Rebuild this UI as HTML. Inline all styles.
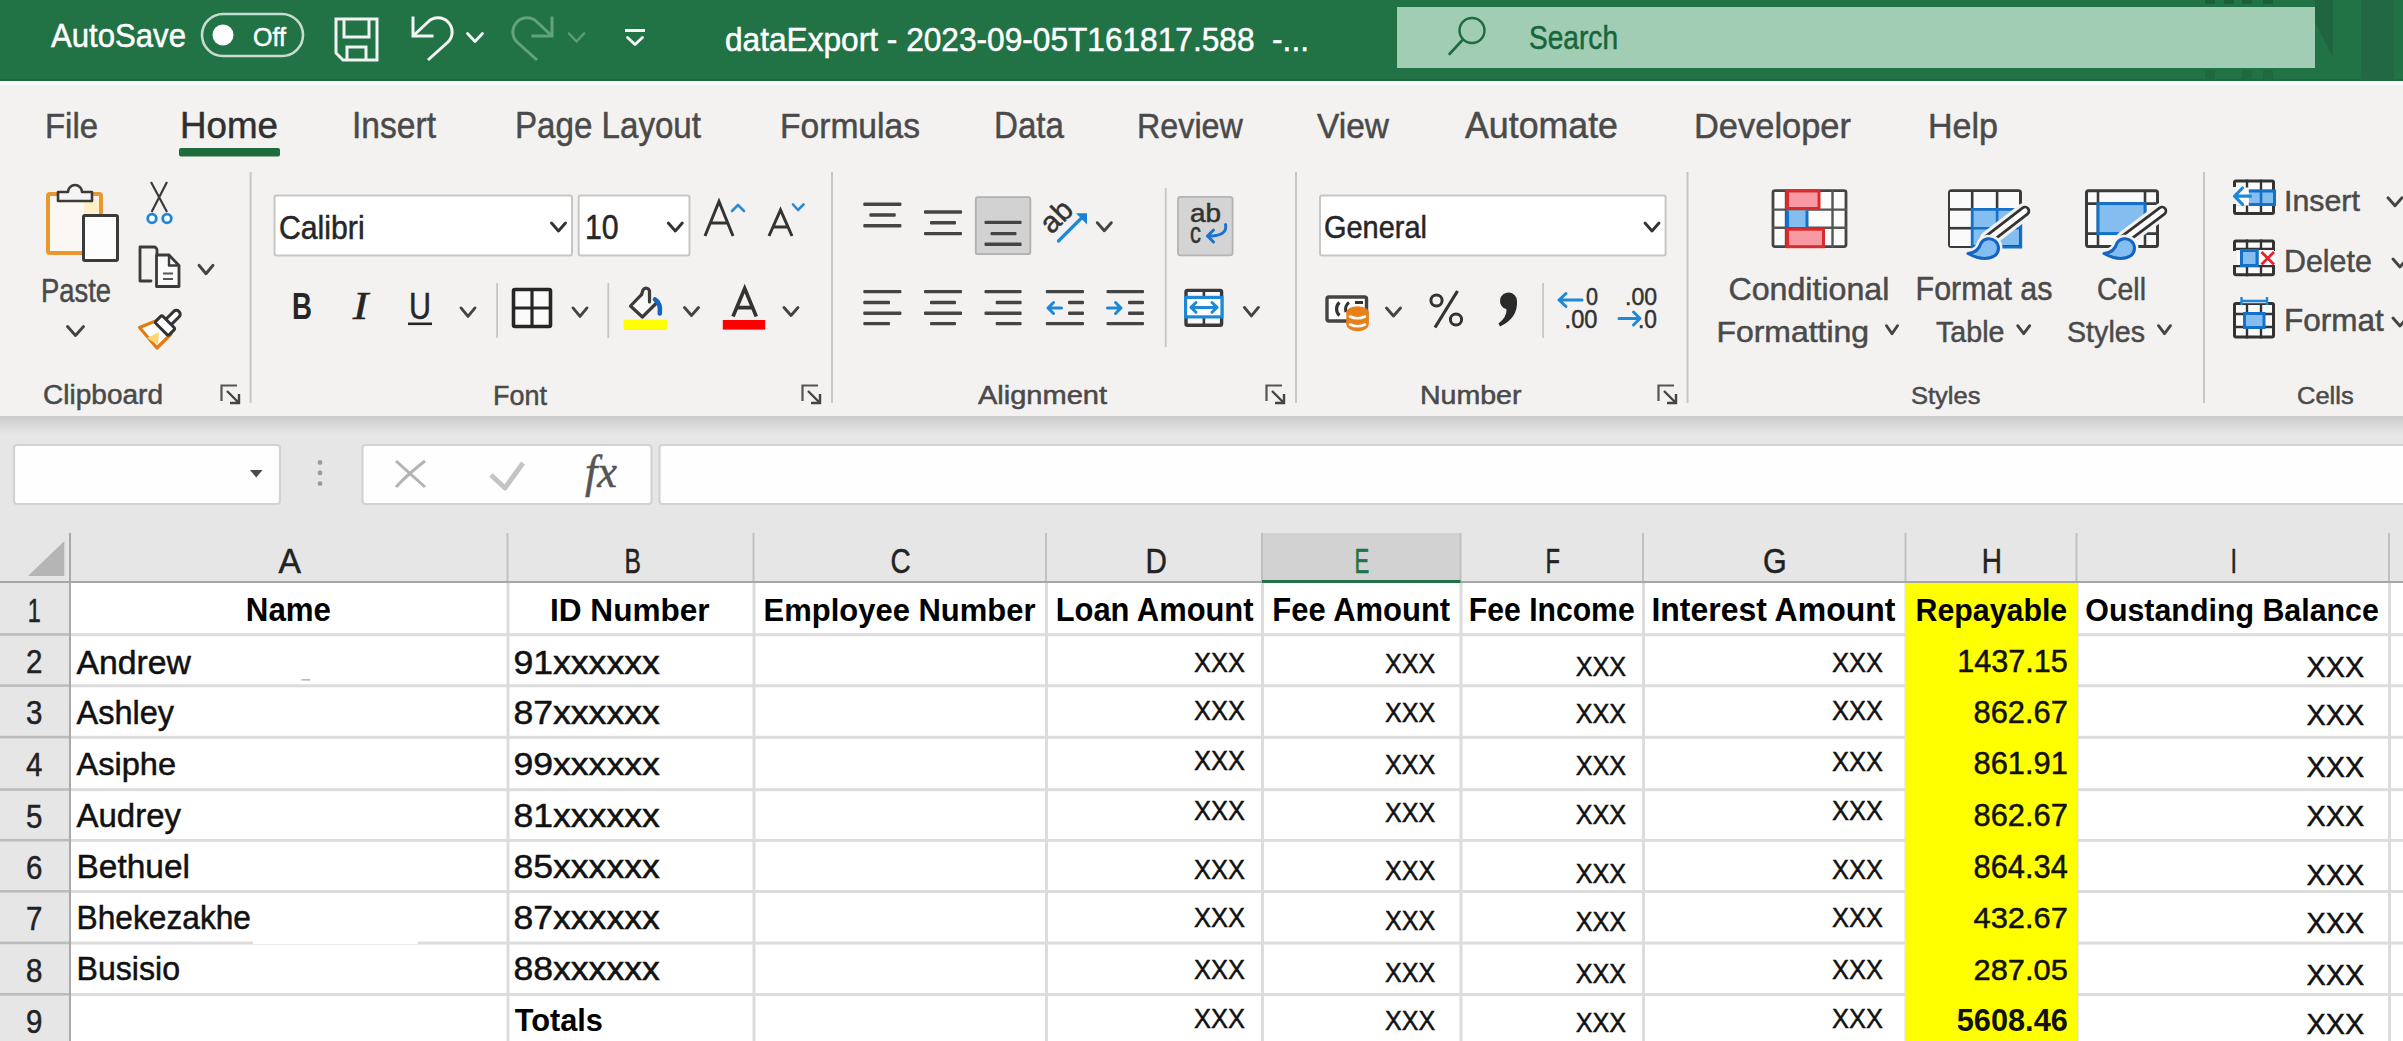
<!DOCTYPE html>
<html><head><meta charset="utf-8"><title>Excel</title>
<style>html,body{margin:0;padding:0;overflow:hidden;background:#fff}svg{display:block}</style></head>
<body><svg width="2403" height="1041" viewBox="0 0 2403 1041">
<rect x="0" y="0" width="2403" height="81" fill="#217346" />
<rect x="0" y="79" width="2403" height="2" fill="#1b6a3c" />
<rect x="0" y="81" width="2403" height="4" fill="#fbfbfb" />
<rect x="0" y="85" width="2403" height="331" fill="#f3f2f1" />
<rect x="1397" y="7" width="918" height="61" fill="#a0cdb4" />
<path d="M2315,0 L2333,0 L2333,58 L2315,22 Z" stroke="none" stroke-width="2" fill="#1f6640" />
<rect x="2361" y="0" width="33" height="80" fill="#236845" />
<rect x="2205" y="0" width="10" height="4" fill="#1c5f3a" />
<rect x="2224" y="0" width="10" height="4" fill="#1c5f3a" />
<rect x="2242" y="0" width="10" height="4" fill="#1c5f3a" />
<rect x="2263" y="0" width="10" height="4" fill="#1c5f3a" />
<rect x="2205" y="70" width="10" height="9" fill="#1e6940" />
<rect x="2242" y="70" width="10" height="9" fill="#1e6940" />
<rect x="2263" y="70" width="10" height="9" fill="#1e6940" />
<text x="51.00" y="47.00" font-size="32.95" font-family="'Liberation Sans',sans-serif" fill="#ffffff" textLength="135.01" lengthAdjust="spacingAndGlyphs" style="white-space:pre" stroke="#ffffff" stroke-width="0.5">AutoSave</text>
<rect x="202" y="14" width="101" height="42" rx="21" fill="none" stroke="#c6ddcd" stroke-width="2.6"/>
<circle cx="223" cy="35" r="10.5" fill="#ffffff"/>
<text x="253.00" y="46.00" font-size="26.24" font-family="'Liberation Sans',sans-serif" fill="#ffffff" textLength="32.94" lengthAdjust="spacingAndGlyphs" style="white-space:pre" stroke="#ffffff" stroke-width="0.5">Off</text>
<path d="M336,19 L377,19 L377,60 L343,60 L336,53 Z" stroke="#f2f2f2" stroke-width="3" fill="none" />
<path d="M344,19 L344,37 L369,37 L369,19" stroke="#f2f2f2" stroke-width="3" fill="none" />
<path d="M347,60 L347,47 L366,47 L366,60" stroke="#f2f2f2" stroke-width="3" fill="none" />
<path d="M413,18 L413,36 L432,36" stroke="#f5f5f5" stroke-width="3" fill="none" stroke-linecap="square"/>
<path d="M413,36 L428,22 A14,14 0 0 1 448,42 L428,60" stroke="#f5f5f5" stroke-width="3" fill="none" />
<path d="M467.5,33.5 L475,41.5 L482.5,33.5" stroke="#f5f5f5" stroke-width="2.8" fill="none" stroke-linecap="round" stroke-linejoin="round"/>
<path d="M552,18 L552,36 L533,36" stroke="#62a37d" stroke-width="3" fill="none" stroke-linecap="square"/>
<path d="M552,36 L537,22 A14,14 0 0 0 517,42 L537,60" stroke="#62a37d" stroke-width="3" fill="none" />
<path d="M569.0,33.5 L576.5,41.5 L584.0,33.5" stroke="#5c9c77" stroke-width="2.5" fill="none" stroke-linecap="round" stroke-linejoin="round"/>
<rect x="625" y="29" width="20" height="3" fill="#f5f5f5" />
<path d="M627.5,37.5 L635,44.5 L642.5,37.5" stroke="#f5f5f5" stroke-width="2.9" fill="none" stroke-linecap="round" stroke-linejoin="round"/>
<text x="725.00" y="50.60" font-size="33.10" font-family="'Liberation Sans',sans-serif" fill="#ffffff" textLength="583.99" lengthAdjust="spacingAndGlyphs" style="white-space:pre" stroke="#ffffff" stroke-width="0.5">dataExport - 2023-09-05T161817.588  -...</text>
<circle cx="1472" cy="30.5" r="12.5" fill="none" stroke="#1e6b3f" stroke-width="2.4"/>
<line x1="1463" y1="39.5" x2="1449.5" y2="54" stroke="#1e6b3f" stroke-width="2.6" stroke-linecap="round"/>
<text x="1529.00" y="49.00" font-size="33.10" font-family="'Liberation Sans',sans-serif" fill="#17653a" textLength="89.01" lengthAdjust="spacingAndGlyphs" style="white-space:pre" stroke="#17653a" stroke-width="0.5">Search</text>
<text x="45.00" y="137.60" font-size="34.48" font-family="'Liberation Sans',sans-serif" fill="#4a4a4a" textLength="53.01" lengthAdjust="spacingAndGlyphs" style="white-space:pre" stroke="#4a4a4a" stroke-width="0.5">File</text>
<text x="180.00" y="137.60" font-size="36.34" font-family="'Liberation Sans',sans-serif" fill="#303030" textLength="97.98" lengthAdjust="spacingAndGlyphs" style="white-space:pre" stroke="#303030" stroke-width="0.5">Home</text>
<text x="352.00" y="137.60" font-size="36.34" font-family="'Liberation Sans',sans-serif" fill="#4a4a4a" textLength="84.00" lengthAdjust="spacingAndGlyphs" style="white-space:pre" stroke="#4a4a4a" stroke-width="0.5">Insert</text>
<text x="515.00" y="137.60" font-size="36.34" font-family="'Liberation Sans',sans-serif" fill="#4a4a4a" textLength="185.99" lengthAdjust="spacingAndGlyphs" style="white-space:pre" stroke="#4a4a4a" stroke-width="0.5">Page Layout</text>
<text x="780.00" y="137.60" font-size="34.48" font-family="'Liberation Sans',sans-serif" fill="#4a4a4a" textLength="139.98" lengthAdjust="spacingAndGlyphs" style="white-space:pre" stroke="#4a4a4a" stroke-width="0.5">Formulas</text>
<text x="994.00" y="137.60" font-size="36.34" font-family="'Liberation Sans',sans-serif" fill="#4a4a4a" textLength="69.98" lengthAdjust="spacingAndGlyphs" style="white-space:pre" stroke="#4a4a4a" stroke-width="0.5">Data</text>
<text x="1137.00" y="137.60" font-size="34.48" font-family="'Liberation Sans',sans-serif" fill="#4a4a4a" textLength="105.90" lengthAdjust="spacingAndGlyphs" style="white-space:pre" stroke="#4a4a4a" stroke-width="0.5">Review</text>
<text x="1317.00" y="137.60" font-size="34.48" font-family="'Liberation Sans',sans-serif" fill="#4a4a4a" textLength="71.91" lengthAdjust="spacingAndGlyphs" style="white-space:pre" stroke="#4a4a4a" stroke-width="0.5">View</text>
<text x="1465.00" y="137.60" font-size="36.34" font-family="'Liberation Sans',sans-serif" fill="#4a4a4a" textLength="153.01" lengthAdjust="spacingAndGlyphs" style="white-space:pre" stroke="#4a4a4a" stroke-width="0.5">Automate</text>
<text x="1694.00" y="137.60" font-size="34.48" font-family="'Liberation Sans',sans-serif" fill="#4a4a4a" textLength="157.00" lengthAdjust="spacingAndGlyphs" style="white-space:pre" stroke="#4a4a4a" stroke-width="0.5">Developer</text>
<text x="1928.00" y="137.60" font-size="34.48" font-family="'Liberation Sans',sans-serif" fill="#4a4a4a" textLength="69.99" lengthAdjust="spacingAndGlyphs" style="white-space:pre" stroke="#4a4a4a" stroke-width="0.5">Help</text>
<rect x="179" y="148" width="101" height="8.5" rx="2" fill="#1e6b3d"/>
<text x="41.00" y="302.00" font-size="33.43" font-family="'Liberation Sans',sans-serif" fill="#4a4a4a" textLength="70.00" lengthAdjust="spacingAndGlyphs" style="white-space:pre" stroke="#4a4a4a" stroke-width="0.5">Paste</text>
<text x="43.00" y="404.00" font-size="27.59" font-family="'Liberation Sans',sans-serif" fill="#4a4a4a" textLength="120.01" lengthAdjust="spacingAndGlyphs" style="white-space:pre" stroke="#4a4a4a" stroke-width="0.5">Clipboard</text>
<text x="493.00" y="404.70" font-size="27.91" font-family="'Liberation Sans',sans-serif" fill="#4a4a4a" textLength="54.00" lengthAdjust="spacingAndGlyphs" style="white-space:pre" stroke="#4a4a4a" stroke-width="0.5">Font</text>
<text x="978.00" y="404.40" font-size="25.38" font-family="'Liberation Sans',sans-serif" fill="#4a4a4a" textLength="128.99" lengthAdjust="spacingAndGlyphs" style="white-space:pre" stroke="#4a4a4a" stroke-width="0.5">Alignment</text>
<text x="1420.00" y="404.40" font-size="25.38" font-family="'Liberation Sans',sans-serif" fill="#4a4a4a" textLength="101.49" lengthAdjust="spacingAndGlyphs" style="white-space:pre" stroke="#4a4a4a" stroke-width="0.5">Number</text>
<text x="1728.40" y="299.70" font-size="31.31" font-family="'Liberation Sans',sans-serif" fill="#4a4a4a" textLength="161.01" lengthAdjust="spacingAndGlyphs" style="white-space:pre" stroke="#4a4a4a" stroke-width="0.5">Conditional</text>
<text x="1716.40" y="341.70" font-size="29.93" font-family="'Liberation Sans',sans-serif" fill="#4a4a4a" textLength="152.61" lengthAdjust="spacingAndGlyphs" style="white-space:pre" stroke="#4a4a4a" stroke-width="0.5">Formatting</text>
<text x="1915.60" y="299.70" font-size="32.99" font-family="'Liberation Sans',sans-serif" fill="#4a4a4a" textLength="136.90" lengthAdjust="spacingAndGlyphs" style="white-space:pre" stroke="#4a4a4a" stroke-width="0.5">Format as</text>
<text x="1936.00" y="341.70" font-size="29.93" font-family="'Liberation Sans',sans-serif" fill="#4a4a4a" textLength="68.49" lengthAdjust="spacingAndGlyphs" style="white-space:pre" stroke="#4a4a4a" stroke-width="0.5">Table</text>
<text x="2097.00" y="299.70" font-size="31.31" font-family="'Liberation Sans',sans-serif" fill="#4a4a4a" textLength="48.99" lengthAdjust="spacingAndGlyphs" style="white-space:pre" stroke="#4a4a4a" stroke-width="0.5">Cell</text>
<text x="2067.00" y="341.70" font-size="29.93" font-family="'Liberation Sans',sans-serif" fill="#4a4a4a" textLength="78.00" lengthAdjust="spacingAndGlyphs" style="white-space:pre" stroke="#4a4a4a" stroke-width="0.5">Styles</text>
<text x="1911.00" y="404.00" font-size="24.83" font-family="'Liberation Sans',sans-serif" fill="#4a4a4a" textLength="69.50" lengthAdjust="spacingAndGlyphs" style="white-space:pre" stroke="#4a4a4a" stroke-width="0.5">Styles</text>
<text x="2284.00" y="211.30" font-size="30.38" font-family="'Liberation Sans',sans-serif" fill="#4a4a4a" textLength="75.80" lengthAdjust="spacingAndGlyphs" style="white-space:pre" stroke="#4a4a4a" stroke-width="0.5">Insert</text>
<text x="2284.00" y="272.00" font-size="31.31" font-family="'Liberation Sans',sans-serif" fill="#4a4a4a" textLength="87.79" lengthAdjust="spacingAndGlyphs" style="white-space:pre" stroke="#4a4a4a" stroke-width="0.5">Delete</text>
<text x="2284.00" y="331.00" font-size="31.54" font-family="'Liberation Sans',sans-serif" fill="#4a4a4a" textLength="99.80" lengthAdjust="spacingAndGlyphs" style="white-space:pre" stroke="#4a4a4a" stroke-width="0.5">Format</text>
<text x="2297.00" y="404.00" font-size="24.83" font-family="'Liberation Sans',sans-serif" fill="#4a4a4a" textLength="56.69" lengthAdjust="spacingAndGlyphs" style="white-space:pre" stroke="#4a4a4a" stroke-width="0.5">Cells</text>
<rect x="249.6" y="172" width="2" height="231" fill="#c8c6c4" />
<rect x="831" y="172" width="2" height="231" fill="#c8c6c4" />
<rect x="1295" y="172" width="2" height="231" fill="#c8c6c4" />
<rect x="1686.5" y="172" width="2" height="231" fill="#c8c6c4" />
<rect x="2203" y="172" width="2" height="231" fill="#c8c6c4" />
<rect x="274.5" y="195.5" width="297.5" height="60" rx="2" fill="#ffffff" stroke="#c8c6c4" stroke-width="2"/>
<rect x="578.7" y="195.5" width="110.79999999999995" height="60" rx="2" fill="#ffffff" stroke="#c8c6c4" stroke-width="2"/>
<rect x="1320" y="195.5" width="345.5999999999999" height="60" rx="2" fill="#ffffff" stroke="#c8c6c4" stroke-width="2"/>
<text x="279.00" y="238.80" font-size="33.38" font-family="'Liberation Sans',sans-serif" fill="#262626" textLength="85.60" lengthAdjust="spacingAndGlyphs" style="white-space:pre" stroke="#262626" stroke-width="0.5">Calibri</text>
<text x="585.00" y="238.80" font-size="34.67" font-family="'Liberation Sans',sans-serif" fill="#262626" textLength="33.71" lengthAdjust="spacingAndGlyphs" style="white-space:pre" stroke="#262626" stroke-width="0.5">10</text>
<text x="1324.00" y="238.00" font-size="31.03" font-family="'Liberation Sans',sans-serif" fill="#262626" textLength="102.99" lengthAdjust="spacingAndGlyphs" style="white-space:pre" stroke="#262626" stroke-width="0.5">General</text>
<path d="M551.5,223.0 L558.5,231.0 L565.5,223.0" stroke="#333" stroke-width="2.9" fill="none" stroke-linecap="round" stroke-linejoin="round"/>
<path d="M668.3,223.0 L675.3,231.0 L682.3,223.0" stroke="#333" stroke-width="2.9" fill="none" stroke-linecap="round" stroke-linejoin="round"/>
<path d="M1645.0,223.0 L1652,231.0 L1659.0,223.0" stroke="#333" stroke-width="2.9" fill="none" stroke-linecap="round" stroke-linejoin="round"/>
<rect x="0" y="416" width="2403" height="167" fill="#e6e6e6" />
<defs><linearGradient id="sh" x1="0" y1="0" x2="0" y2="1"><stop offset="0" stop-color="#cbcbcb"/><stop offset="1" stop-color="#e6e6e6"/></linearGradient></defs>
<rect x="0" y="416" width="2403" height="18" fill="url(#sh)" />
<rect x="14" y="445" width="266" height="59" rx="3" fill="#fefefe" stroke="#d2d2d2" stroke-width="2.2"/>
<path d="M250,470 L262.5,470 L256.2,477.5 Z" stroke="none" stroke-width="2" fill="#4a4a4a" />
<circle cx="320" cy="462.5" r="2.4" fill="#9b9b9b"/>
<circle cx="320" cy="473" r="2.4" fill="#9b9b9b"/>
<circle cx="320" cy="483.6" r="2.4" fill="#9b9b9b"/>
<rect x="362.5" y="445" width="289" height="59" rx="3" fill="#fefefe" stroke="#d2d2d2" stroke-width="2.2"/>
<rect x="659.5" y="445" width="1760" height="59" rx="3" fill="#fefefe" stroke="#d2d2d2" stroke-width="2.2"/>
<path d="M396,461 L425,487 M425,461 Q408,474 396,487" stroke="#b3b3b3" stroke-width="3" fill="none" />
<path d="M491,475 L505,488 L523,463" stroke="#c4c4c4" stroke-width="5" fill="none" stroke-linejoin="round"/>
<text x="585.00" y="487.00" font-size="45.45" font-family="'Liberation Serif',serif" font-style="italic" fill="#555555" textLength="31.99" lengthAdjust="spacingAndGlyphs" style="white-space:pre" stroke="#555555" stroke-width="0.5">fx</text>
<rect x="70" y="583" width="2333" height="458" fill="#ffffff" />
<rect x="0" y="583" width="70" height="458" fill="#e6e6e6" />
<rect x="1262" y="533" width="198.5" height="49" fill="#d2d2d2" />
<rect x="70" y="633.2" width="2333" height="3" fill="#dcdcdc" />
<rect x="70" y="684.3" width="2333" height="3" fill="#dcdcdc" />
<rect x="70" y="735.8" width="2333" height="3" fill="#dcdcdc" />
<rect x="70" y="788.2" width="2333" height="3" fill="#dcdcdc" />
<rect x="70" y="838.9" width="2333" height="3" fill="#dcdcdc" />
<rect x="70" y="890" width="2333" height="3" fill="#dcdcdc" />
<rect x="70" y="941.6" width="2333" height="3" fill="#dcdcdc" />
<rect x="70" y="993" width="2333" height="3" fill="#dcdcdc" />
<rect x="506.5" y="583" width="3" height="458" fill="#dcdcdc" />
<rect x="752.5" y="583" width="3" height="458" fill="#dcdcdc" />
<rect x="1045" y="583" width="3" height="458" fill="#dcdcdc" />
<rect x="1261" y="583" width="3" height="458" fill="#dcdcdc" />
<rect x="1459.5" y="583" width="3" height="458" fill="#dcdcdc" />
<rect x="1642" y="583" width="3" height="458" fill="#dcdcdc" />
<rect x="1904.5" y="583" width="3" height="458" fill="#dcdcdc" />
<rect x="2075.5" y="583" width="3" height="458" fill="#dcdcdc" />
<rect x="2388" y="583" width="3" height="458" fill="#dcdcdc" />
<rect x="1905" y="583" width="172" height="458" fill="#ffff00" />
<rect x="253" y="941" width="165" height="3" fill="#ffffff" />
<rect x="301.5" y="679" width="8.5" height="1.6" fill="#b8b8b8" />
<rect x="506.5" y="533" width="2" height="49" fill="#c0c0c0" />
<rect x="752.5" y="533" width="2" height="49" fill="#c0c0c0" />
<rect x="1045" y="533" width="2" height="49" fill="#c0c0c0" />
<rect x="1261" y="533" width="2" height="49" fill="#c0c0c0" />
<rect x="1459.5" y="533" width="2" height="49" fill="#c0c0c0" />
<rect x="1642" y="533" width="2" height="49" fill="#c0c0c0" />
<rect x="1904.5" y="533" width="2" height="49" fill="#c0c0c0" />
<rect x="2075.5" y="533" width="2" height="49" fill="#c0c0c0" />
<rect x="2388" y="533" width="2" height="49" fill="#c0c0c0" />
<rect x="69" y="533" width="2" height="508" fill="#a9a9a9" />
<rect x="0" y="633.2" width="69" height="2.6" fill="#bcbcbc" />
<rect x="0" y="684.3" width="69" height="2.6" fill="#bcbcbc" />
<rect x="0" y="735.8" width="69" height="2.6" fill="#bcbcbc" />
<rect x="0" y="788.2" width="69" height="2.6" fill="#bcbcbc" />
<rect x="0" y="838.9" width="69" height="2.6" fill="#bcbcbc" />
<rect x="0" y="890" width="69" height="2.6" fill="#bcbcbc" />
<rect x="0" y="941.6" width="69" height="2.6" fill="#bcbcbc" />
<rect x="0" y="993" width="69" height="2.6" fill="#bcbcbc" />
<rect x="0" y="581" width="2403" height="2" fill="#a6a6a6" />
<rect x="1262" y="580" width="198.5" height="3" fill="#217346" />
<path d="M64.4,541 L64.4,576 L28,576 Z" stroke="none" stroke-width="2" fill="#b5b5b5" />
<text x="278.50" y="573.00" font-size="34.88" font-family="'Liberation Sans',sans-serif" fill="#222222" textLength="22.50" lengthAdjust="spacingAndGlyphs" style="white-space:pre" stroke="#222222" stroke-width="0.5">A</text>
<text x="624.60" y="573.00" font-size="34.88" font-family="'Liberation Sans',sans-serif" fill="#222222" textLength="16.40" lengthAdjust="spacingAndGlyphs" style="white-space:pre" stroke="#222222" stroke-width="0.5">B</text>
<text x="890.60" y="573.00" font-size="34.38" font-family="'Liberation Sans',sans-serif" fill="#222222" textLength="20.20" lengthAdjust="spacingAndGlyphs" style="white-space:pre" stroke="#222222" stroke-width="0.5">C</text>
<text x="1145.60" y="573.00" font-size="34.88" font-family="'Liberation Sans',sans-serif" fill="#222222" textLength="21.41" lengthAdjust="spacingAndGlyphs" style="white-space:pre" stroke="#222222" stroke-width="0.5">D</text>
<text x="1354.50" y="573.00" font-size="34.88" font-family="'Liberation Sans',sans-serif" fill="#217346" textLength="14.80" lengthAdjust="spacingAndGlyphs" style="white-space:pre" stroke="#217346" stroke-width="0.5">E</text>
<text x="1545.50" y="573.00" font-size="34.88" font-family="'Liberation Sans',sans-serif" fill="#222222" textLength="14.50" lengthAdjust="spacingAndGlyphs" style="white-space:pre" stroke="#222222" stroke-width="0.5">F</text>
<text x="1763.00" y="573.00" font-size="34.38" font-family="'Liberation Sans',sans-serif" fill="#222222" textLength="23.69" lengthAdjust="spacingAndGlyphs" style="white-space:pre" stroke="#222222" stroke-width="0.5">G</text>
<text x="1981.80" y="573.00" font-size="34.88" font-family="'Liberation Sans',sans-serif" fill="#222222" textLength="20.20" lengthAdjust="spacingAndGlyphs" style="white-space:pre" stroke="#222222" stroke-width="0.5">H</text>
<text x="2230.50" y="573.00" font-size="34.88" font-family="'Liberation Sans',sans-serif" fill="#222222" textLength="6.50" lengthAdjust="spacingAndGlyphs" style="white-space:pre" stroke="#222222" stroke-width="0.5">I</text>
<text x="27.70" y="622.00" font-size="34.01" font-family="'Liberation Sans',sans-serif" fill="#222222" textLength="13.00" lengthAdjust="spacingAndGlyphs" style="white-space:pre" stroke="#222222" stroke-width="0.5">1</text>
<text x="26.00" y="673.20" font-size="33.52" font-family="'Liberation Sans',sans-serif" fill="#222222" textLength="16.40" lengthAdjust="spacingAndGlyphs" style="white-space:pre" stroke="#222222" stroke-width="0.5">2</text>
<text x="26.00" y="724.30" font-size="33.52" font-family="'Liberation Sans',sans-serif" fill="#222222" textLength="16.40" lengthAdjust="spacingAndGlyphs" style="white-space:pre" stroke="#222222" stroke-width="0.5">3</text>
<text x="26.00" y="775.80" font-size="34.01" font-family="'Liberation Sans',sans-serif" fill="#222222" textLength="16.40" lengthAdjust="spacingAndGlyphs" style="white-space:pre" stroke="#222222" stroke-width="0.5">4</text>
<text x="26.00" y="828.20" font-size="34.01" font-family="'Liberation Sans',sans-serif" fill="#222222" textLength="16.40" lengthAdjust="spacingAndGlyphs" style="white-space:pre" stroke="#222222" stroke-width="0.5">5</text>
<text x="26.00" y="878.90" font-size="33.52" font-family="'Liberation Sans',sans-serif" fill="#222222" textLength="16.40" lengthAdjust="spacingAndGlyphs" style="white-space:pre" stroke="#222222" stroke-width="0.5">6</text>
<text x="26.00" y="930.00" font-size="34.01" font-family="'Liberation Sans',sans-serif" fill="#222222" textLength="16.40" lengthAdjust="spacingAndGlyphs" style="white-space:pre" stroke="#222222" stroke-width="0.5">7</text>
<text x="26.00" y="981.60" font-size="33.52" font-family="'Liberation Sans',sans-serif" fill="#222222" textLength="16.40" lengthAdjust="spacingAndGlyphs" style="white-space:pre" stroke="#222222" stroke-width="0.5">8</text>
<text x="26.00" y="1033.00" font-size="33.52" font-family="'Liberation Sans',sans-serif" fill="#222222" textLength="16.40" lengthAdjust="spacingAndGlyphs" style="white-space:pre" stroke="#222222" stroke-width="0.5">9</text>
<text x="245.80" y="620.60" font-size="32.41" font-family="'Liberation Sans',sans-serif" font-weight="bold" fill="#000000" textLength="85.19" lengthAdjust="spacingAndGlyphs" style="white-space:pre">Name</text>
<text x="550.00" y="620.60" font-size="30.76" font-family="'Liberation Sans',sans-serif" font-weight="bold" fill="#000000" textLength="159.60" lengthAdjust="spacingAndGlyphs" style="white-space:pre">ID Number</text>
<text x="763.60" y="620.60" font-size="30.76" font-family="'Liberation Sans',sans-serif" font-weight="bold" fill="#000000" textLength="271.91" lengthAdjust="spacingAndGlyphs" style="white-space:pre">Employee Number</text>
<text x="1055.70" y="620.60" font-size="32.41" font-family="'Liberation Sans',sans-serif" font-weight="bold" fill="#000000" textLength="197.81" lengthAdjust="spacingAndGlyphs" style="white-space:pre">Loan Amount</text>
<text x="1272.30" y="620.60" font-size="32.41" font-family="'Liberation Sans',sans-serif" font-weight="bold" fill="#000000" textLength="177.89" lengthAdjust="spacingAndGlyphs" style="white-space:pre">Fee Amount</text>
<text x="1468.80" y="620.60" font-size="32.41" font-family="'Liberation Sans',sans-serif" font-weight="bold" fill="#000000" textLength="165.90" lengthAdjust="spacingAndGlyphs" style="white-space:pre">Fee Income</text>
<text x="1651.40" y="620.60" font-size="32.41" font-family="'Liberation Sans',sans-serif" font-weight="bold" fill="#000000" textLength="244.00" lengthAdjust="spacingAndGlyphs" style="white-space:pre">Interest Amount</text>
<text x="1915.60" y="620.60" font-size="30.76" font-family="'Liberation Sans',sans-serif" font-weight="bold" fill="#000000" textLength="151.61" lengthAdjust="spacingAndGlyphs" style="white-space:pre">Repayable</text>
<text x="2085.30" y="620.60" font-size="30.76" font-family="'Liberation Sans',sans-serif" font-weight="bold" fill="#000000" textLength="293.58" lengthAdjust="spacingAndGlyphs" style="white-space:pre">Oustanding Balance</text>
<text x="76.50" y="673.70" font-size="33.10" font-family="'Liberation Sans',sans-serif" fill="#111111" textLength="114.42" lengthAdjust="spacingAndGlyphs" style="white-space:pre" stroke="#111111" stroke-width="0.5">Andrew</text>
<text x="513.40" y="673.70" font-size="32.95" font-family="'Liberation Sans',sans-serif" fill="#111111" textLength="146.41" lengthAdjust="spacingAndGlyphs" style="white-space:pre" stroke="#111111" stroke-width="0.5">91xxxxxx</text>
<text x="76.50" y="724.00" font-size="33.10" font-family="'Liberation Sans',sans-serif" fill="#111111" textLength="97.52" lengthAdjust="spacingAndGlyphs" style="white-space:pre" stroke="#111111" stroke-width="0.5">Ashley</text>
<text x="513.40" y="724.00" font-size="32.95" font-family="'Liberation Sans',sans-serif" fill="#111111" textLength="146.41" lengthAdjust="spacingAndGlyphs" style="white-space:pre" stroke="#111111" stroke-width="0.5">87xxxxxx</text>
<text x="76.50" y="775.00" font-size="31.31" font-family="'Liberation Sans',sans-serif" fill="#111111" textLength="99.49" lengthAdjust="spacingAndGlyphs" style="white-space:pre" stroke="#111111" stroke-width="0.5">Asiphe</text>
<text x="513.40" y="775.00" font-size="31.09" font-family="'Liberation Sans',sans-serif" fill="#111111" textLength="146.41" lengthAdjust="spacingAndGlyphs" style="white-space:pre" stroke="#111111" stroke-width="0.5">99xxxxxx</text>
<text x="76.50" y="826.60" font-size="33.10" font-family="'Liberation Sans',sans-serif" fill="#111111" textLength="104.52" lengthAdjust="spacingAndGlyphs" style="white-space:pre" stroke="#111111" stroke-width="0.5">Audrey</text>
<text x="513.40" y="826.60" font-size="32.95" font-family="'Liberation Sans',sans-serif" fill="#111111" textLength="146.41" lengthAdjust="spacingAndGlyphs" style="white-space:pre" stroke="#111111" stroke-width="0.5">81xxxxxx</text>
<text x="76.50" y="878.00" font-size="33.52" font-family="'Liberation Sans',sans-serif" fill="#111111" textLength="113.49" lengthAdjust="spacingAndGlyphs" style="white-space:pre" stroke="#111111" stroke-width="0.5">Bethuel</text>
<text x="513.40" y="878.00" font-size="33.38" font-family="'Liberation Sans',sans-serif" fill="#111111" textLength="146.41" lengthAdjust="spacingAndGlyphs" style="white-space:pre" stroke="#111111" stroke-width="0.5">85xxxxxx</text>
<text x="76.50" y="929.30" font-size="33.10" font-family="'Liberation Sans',sans-serif" fill="#111111" textLength="174.50" lengthAdjust="spacingAndGlyphs" style="white-space:pre" stroke="#111111" stroke-width="0.5">Bhekezakhe</text>
<text x="513.40" y="929.30" font-size="32.95" font-family="'Liberation Sans',sans-serif" fill="#111111" textLength="146.41" lengthAdjust="spacingAndGlyphs" style="white-space:pre" stroke="#111111" stroke-width="0.5">87xxxxxx</text>
<text x="76.50" y="980.40" font-size="32.55" font-family="'Liberation Sans',sans-serif" fill="#111111" textLength="103.49" lengthAdjust="spacingAndGlyphs" style="white-space:pre" stroke="#111111" stroke-width="0.5">Busisio</text>
<text x="513.40" y="980.40" font-size="32.38" font-family="'Liberation Sans',sans-serif" fill="#111111" textLength="146.41" lengthAdjust="spacingAndGlyphs" style="white-space:pre" stroke="#111111" stroke-width="0.5">88xxxxxx</text>
<text x="514.70" y="1031.00" font-size="31.72" font-family="'Liberation Sans',sans-serif" font-weight="bold" fill="#000000" textLength="88.29" lengthAdjust="spacingAndGlyphs" style="white-space:pre">Totals</text>
<text x="1194.00" y="671.50" font-size="27.62" font-family="'Liberation Sans',sans-serif" fill="#111111" textLength="51.00" lengthAdjust="spacingAndGlyphs" style="white-space:pre" stroke="#111111" stroke-width="0.45">XXX</text>
<text x="1194.00" y="719.80" font-size="27.62" font-family="'Liberation Sans',sans-serif" fill="#111111" textLength="51.00" lengthAdjust="spacingAndGlyphs" style="white-space:pre" stroke="#111111" stroke-width="0.45">XXX</text>
<text x="1194.00" y="770.00" font-size="27.62" font-family="'Liberation Sans',sans-serif" fill="#111111" textLength="51.00" lengthAdjust="spacingAndGlyphs" style="white-space:pre" stroke="#111111" stroke-width="0.45">XXX</text>
<text x="1194.00" y="819.70" font-size="27.62" font-family="'Liberation Sans',sans-serif" fill="#111111" textLength="51.00" lengthAdjust="spacingAndGlyphs" style="white-space:pre" stroke="#111111" stroke-width="0.45">XXX</text>
<text x="1194.00" y="878.60" font-size="27.62" font-family="'Liberation Sans',sans-serif" fill="#111111" textLength="51.00" lengthAdjust="spacingAndGlyphs" style="white-space:pre" stroke="#111111" stroke-width="0.45">XXX</text>
<text x="1194.00" y="927.00" font-size="27.62" font-family="'Liberation Sans',sans-serif" fill="#111111" textLength="51.00" lengthAdjust="spacingAndGlyphs" style="white-space:pre" stroke="#111111" stroke-width="0.45">XXX</text>
<text x="1194.00" y="979.00" font-size="27.62" font-family="'Liberation Sans',sans-serif" fill="#111111" textLength="51.00" lengthAdjust="spacingAndGlyphs" style="white-space:pre" stroke="#111111" stroke-width="0.45">XXX</text>
<text x="1194.00" y="1028.40" font-size="27.62" font-family="'Liberation Sans',sans-serif" fill="#111111" textLength="51.00" lengthAdjust="spacingAndGlyphs" style="white-space:pre" stroke="#111111" stroke-width="0.45">XXX</text>
<text x="1385.00" y="673.00" font-size="27.62" font-family="'Liberation Sans',sans-serif" fill="#111111" textLength="50.30" lengthAdjust="spacingAndGlyphs" style="white-space:pre" stroke="#111111" stroke-width="0.45">XXX</text>
<text x="1385.00" y="721.50" font-size="27.62" font-family="'Liberation Sans',sans-serif" fill="#111111" textLength="50.30" lengthAdjust="spacingAndGlyphs" style="white-space:pre" stroke="#111111" stroke-width="0.45">XXX</text>
<text x="1385.00" y="773.50" font-size="27.62" font-family="'Liberation Sans',sans-serif" fill="#111111" textLength="50.30" lengthAdjust="spacingAndGlyphs" style="white-space:pre" stroke="#111111" stroke-width="0.45">XXX</text>
<text x="1385.00" y="822.00" font-size="27.62" font-family="'Liberation Sans',sans-serif" fill="#111111" textLength="50.30" lengthAdjust="spacingAndGlyphs" style="white-space:pre" stroke="#111111" stroke-width="0.45">XXX</text>
<text x="1385.00" y="880.00" font-size="27.62" font-family="'Liberation Sans',sans-serif" fill="#111111" textLength="50.30" lengthAdjust="spacingAndGlyphs" style="white-space:pre" stroke="#111111" stroke-width="0.45">XXX</text>
<text x="1385.00" y="929.60" font-size="27.62" font-family="'Liberation Sans',sans-serif" fill="#111111" textLength="50.30" lengthAdjust="spacingAndGlyphs" style="white-space:pre" stroke="#111111" stroke-width="0.45">XXX</text>
<text x="1385.00" y="981.60" font-size="27.62" font-family="'Liberation Sans',sans-serif" fill="#111111" textLength="50.30" lengthAdjust="spacingAndGlyphs" style="white-space:pre" stroke="#111111" stroke-width="0.45">XXX</text>
<text x="1385.00" y="1030.00" font-size="27.62" font-family="'Liberation Sans',sans-serif" fill="#111111" textLength="50.30" lengthAdjust="spacingAndGlyphs" style="white-space:pre" stroke="#111111" stroke-width="0.45">XXX</text>
<text x="1575.70" y="675.80" font-size="27.62" font-family="'Liberation Sans',sans-serif" fill="#111111" textLength="50.50" lengthAdjust="spacingAndGlyphs" style="white-space:pre" stroke="#111111" stroke-width="0.45">XXX</text>
<text x="1575.70" y="723.30" font-size="27.62" font-family="'Liberation Sans',sans-serif" fill="#111111" textLength="50.50" lengthAdjust="spacingAndGlyphs" style="white-space:pre" stroke="#111111" stroke-width="0.45">XXX</text>
<text x="1575.70" y="775.30" font-size="27.62" font-family="'Liberation Sans',sans-serif" fill="#111111" textLength="50.50" lengthAdjust="spacingAndGlyphs" style="white-space:pre" stroke="#111111" stroke-width="0.45">XXX</text>
<text x="1575.70" y="823.80" font-size="27.62" font-family="'Liberation Sans',sans-serif" fill="#111111" textLength="50.50" lengthAdjust="spacingAndGlyphs" style="white-space:pre" stroke="#111111" stroke-width="0.45">XXX</text>
<text x="1575.70" y="882.80" font-size="27.62" font-family="'Liberation Sans',sans-serif" fill="#111111" textLength="50.50" lengthAdjust="spacingAndGlyphs" style="white-space:pre" stroke="#111111" stroke-width="0.45">XXX</text>
<text x="1575.70" y="931.30" font-size="27.62" font-family="'Liberation Sans',sans-serif" fill="#111111" textLength="50.50" lengthAdjust="spacingAndGlyphs" style="white-space:pre" stroke="#111111" stroke-width="0.45">XXX</text>
<text x="1575.70" y="983.30" font-size="27.62" font-family="'Liberation Sans',sans-serif" fill="#111111" textLength="50.50" lengthAdjust="spacingAndGlyphs" style="white-space:pre" stroke="#111111" stroke-width="0.45">XXX</text>
<text x="1575.70" y="1031.90" font-size="27.62" font-family="'Liberation Sans',sans-serif" fill="#111111" textLength="50.50" lengthAdjust="spacingAndGlyphs" style="white-space:pre" stroke="#111111" stroke-width="0.45">XXX</text>
<text x="1832.00" y="671.70" font-size="27.62" font-family="'Liberation Sans',sans-serif" fill="#111111" textLength="51.00" lengthAdjust="spacingAndGlyphs" style="white-space:pre" stroke="#111111" stroke-width="0.45">XXX</text>
<text x="1832.00" y="719.80" font-size="27.62" font-family="'Liberation Sans',sans-serif" fill="#111111" textLength="51.00" lengthAdjust="spacingAndGlyphs" style="white-space:pre" stroke="#111111" stroke-width="0.45">XXX</text>
<text x="1832.00" y="770.80" font-size="27.62" font-family="'Liberation Sans',sans-serif" fill="#111111" textLength="51.00" lengthAdjust="spacingAndGlyphs" style="white-space:pre" stroke="#111111" stroke-width="0.45">XXX</text>
<text x="1832.00" y="819.70" font-size="27.62" font-family="'Liberation Sans',sans-serif" fill="#111111" textLength="51.00" lengthAdjust="spacingAndGlyphs" style="white-space:pre" stroke="#111111" stroke-width="0.45">XXX</text>
<text x="1832.00" y="878.60" font-size="27.62" font-family="'Liberation Sans',sans-serif" fill="#111111" textLength="51.00" lengthAdjust="spacingAndGlyphs" style="white-space:pre" stroke="#111111" stroke-width="0.45">XXX</text>
<text x="1832.00" y="927.20" font-size="27.62" font-family="'Liberation Sans',sans-serif" fill="#111111" textLength="51.00" lengthAdjust="spacingAndGlyphs" style="white-space:pre" stroke="#111111" stroke-width="0.45">XXX</text>
<text x="1832.00" y="979.20" font-size="27.62" font-family="'Liberation Sans',sans-serif" fill="#111111" textLength="51.00" lengthAdjust="spacingAndGlyphs" style="white-space:pre" stroke="#111111" stroke-width="0.45">XXX</text>
<text x="1832.00" y="1028.40" font-size="27.62" font-family="'Liberation Sans',sans-serif" fill="#111111" textLength="51.00" lengthAdjust="spacingAndGlyphs" style="white-space:pre" stroke="#111111" stroke-width="0.45">XXX</text>
<text x="2306.50" y="677.00" font-size="29.07" font-family="'Liberation Sans',sans-serif" fill="#111111" textLength="57.70" lengthAdjust="spacingAndGlyphs" style="white-space:pre" stroke="#111111" stroke-width="0.45">XXX</text>
<text x="2306.50" y="725.00" font-size="29.07" font-family="'Liberation Sans',sans-serif" fill="#111111" textLength="57.70" lengthAdjust="spacingAndGlyphs" style="white-space:pre" stroke="#111111" stroke-width="0.45">XXX</text>
<text x="2306.50" y="777.00" font-size="29.07" font-family="'Liberation Sans',sans-serif" fill="#111111" textLength="57.70" lengthAdjust="spacingAndGlyphs" style="white-space:pre" stroke="#111111" stroke-width="0.45">XXX</text>
<text x="2306.50" y="825.50" font-size="29.07" font-family="'Liberation Sans',sans-serif" fill="#111111" textLength="57.70" lengthAdjust="spacingAndGlyphs" style="white-space:pre" stroke="#111111" stroke-width="0.45">XXX</text>
<text x="2306.50" y="884.50" font-size="29.07" font-family="'Liberation Sans',sans-serif" fill="#111111" textLength="57.70" lengthAdjust="spacingAndGlyphs" style="white-space:pre" stroke="#111111" stroke-width="0.45">XXX</text>
<text x="2306.50" y="933.00" font-size="29.07" font-family="'Liberation Sans',sans-serif" fill="#111111" textLength="57.70" lengthAdjust="spacingAndGlyphs" style="white-space:pre" stroke="#111111" stroke-width="0.45">XXX</text>
<text x="2306.50" y="985.00" font-size="29.07" font-family="'Liberation Sans',sans-serif" fill="#111111" textLength="57.70" lengthAdjust="spacingAndGlyphs" style="white-space:pre" stroke="#111111" stroke-width="0.45">XXX</text>
<text x="2306.50" y="1033.60" font-size="29.07" font-family="'Liberation Sans',sans-serif" fill="#111111" textLength="57.70" lengthAdjust="spacingAndGlyphs" style="white-space:pre" stroke="#111111" stroke-width="0.45">XXX</text>
<text x="1957.20" y="672.00" font-size="32.09" font-family="'Liberation Sans',sans-serif" fill="#111111" textLength="110.59" lengthAdjust="spacingAndGlyphs" style="white-space:pre" stroke="#111111" stroke-width="0.5">1437.15</text>
<text x="1973.50" y="723.30" font-size="31.23" font-family="'Liberation Sans',sans-serif" fill="#111111" textLength="94.29" lengthAdjust="spacingAndGlyphs" style="white-space:pre" stroke="#111111" stroke-width="0.5">862.67</text>
<text x="1973.50" y="774.30" font-size="30.80" font-family="'Liberation Sans',sans-serif" fill="#111111" textLength="94.29" lengthAdjust="spacingAndGlyphs" style="white-space:pre" stroke="#111111" stroke-width="0.5">861.91</text>
<text x="1973.50" y="825.60" font-size="30.95" font-family="'Liberation Sans',sans-serif" fill="#111111" textLength="94.29" lengthAdjust="spacingAndGlyphs" style="white-space:pre" stroke="#111111" stroke-width="0.5">862.67</text>
<text x="1973.50" y="877.60" font-size="32.38" font-family="'Liberation Sans',sans-serif" fill="#111111" textLength="94.29" lengthAdjust="spacingAndGlyphs" style="white-space:pre" stroke="#111111" stroke-width="0.5">864.34</text>
<text x="1973.50" y="928.00" font-size="30.09" font-family="'Liberation Sans',sans-serif" fill="#111111" textLength="94.29" lengthAdjust="spacingAndGlyphs" style="white-space:pre" stroke="#111111" stroke-width="0.5">432.67</text>
<text x="1973.50" y="980.00" font-size="30.09" font-family="'Liberation Sans',sans-serif" fill="#111111" textLength="94.29" lengthAdjust="spacingAndGlyphs" style="white-space:pre" stroke="#111111" stroke-width="0.5">287.05</text>
<text x="1956.80" y="1031.00" font-size="30.95" font-family="'Liberation Sans',sans-serif" font-weight="bold" fill="#111111" textLength="110.99" lengthAdjust="spacingAndGlyphs" style="white-space:pre">5608.46</text>
<rect x="48" y="194" width="53" height="59" rx="2" fill="#fbf8f3" stroke="#ea9631" stroke-width="4"/>
<rect x="84" y="199" width="15" height="50" fill="#fdf0c8"/>
<path d="M58,201 L58,192 L68,192 A7,7 0 0 1 82,192 L92,192 L92,201 Z" stroke="#3b3b3b" stroke-width="2.6" fill="#f4f4f4" stroke-linecap="round" stroke-linejoin="round"/>
<rect x="83.5" y="215.5" width="34" height="45" rx="1.5" fill="#fdfdfd" stroke="#3a3a3a" stroke-width="3"/>
<path d="M67.5,326.5 L75.5,335.5 L83.5,326.5" stroke="#444" stroke-width="2.9" fill="none" stroke-linecap="round" stroke-linejoin="round"/>
<path d="M151,182 L167,212 M167,182 L151.6,212" stroke="#3b3b3b" stroke-width="2.2" fill="none" />
<circle cx="152" cy="218.5" r="4.3" fill="#fff" stroke="#1e88d8" stroke-width="2.8"/>
<circle cx="167" cy="218.5" r="4.3" fill="#fff" stroke="#1e88d8" stroke-width="2.8"/>
<path d="M151,281 L140,281 L140,247 L154,247 A3,3 0 0 1 157,250 L157,254" stroke="#3b3b3b" stroke-width="2.8" fill="none" stroke-linecap="round" stroke-linejoin="round"/>
<path d="M156.5,255 L169,255 L179,265.5 L179,286.5 L156.5,286.5 Z" stroke="#3b3b3b" stroke-width="2.8" fill="#fafafa" stroke-linecap="round" stroke-linejoin="round"/>
<path d="M169,255 L169,265.5 L179,265.5" stroke="#3b3b3b" stroke-width="2.4" fill="none" stroke-linecap="round" stroke-linejoin="round"/>
<line x1="163" y1="273.5" x2="173" y2="273.5" stroke="#555" stroke-width="2" />
<line x1="163" y1="279" x2="173" y2="279" stroke="#555" stroke-width="2" />
<path d="M199.0,265.25 L206,273.75 L213.0,265.25" stroke="#444" stroke-width="2.9" fill="none" stroke-linecap="round" stroke-linejoin="round"/>
<path d="M139.5,327.5 L157,320.5 L171,334 L157,348 Z" stroke="#e37b12" stroke-width="3.2" fill="#ffffff" stroke-linecap="round" stroke-linejoin="round"/>
<path d="M147,338 L159,332 L158,345 Z" stroke="none" stroke-width="2" fill="#fbd775" />
<g transform="translate(168,322.5) rotate(-45)"><rect x="-2" y="-3.8" width="17.5" height="7.6" rx="3.5" fill="#fff" stroke="#333" stroke-width="3"/></g>
<g transform="translate(165,325.5) rotate(45)"><rect x="-9.5" y="-5" width="19" height="10" rx="2" fill="#fff" stroke="#333" stroke-width="3"/></g>
<path d="M705,236 L719,201.5 L733,236 M710,223 L728,223" stroke="#333" stroke-width="3" fill="none" stroke-linejoin="miter"/>
<path d="M732,211 L738,205 L744,211" stroke="#2a8ad4" stroke-width="2.6" fill="none" stroke-linecap="round" stroke-linejoin="round"/>
<path d="M769,236 L780.5,210 L792,236 M773,227 L788,227" stroke="#333" stroke-width="3" fill="none" />
<path d="M793,204.5 L798,210 L803.5,204.5" stroke="#2a8ad4" stroke-width="2.6" fill="none" stroke-linecap="round" stroke-linejoin="round"/>
<text x="292.00" y="319.00" font-size="37.79" font-family="'Liberation Sans',sans-serif" font-weight="bold" fill="#262626" textLength="20.00" lengthAdjust="spacingAndGlyphs" style="white-space:pre">B</text>
<text x="352.69" y="319.00" font-size="39.69" font-family="'Liberation Serif',serif" font-style="italic" fill="#262626" textLength="15.46" lengthAdjust="spacingAndGlyphs" style="white-space:pre" stroke="#262626" stroke-width="0.5">I</text>
<text x="409.00" y="318.50" font-size="37.06" font-family="'Liberation Sans',sans-serif" fill="#262626" textLength="22.01" lengthAdjust="spacingAndGlyphs" style="white-space:pre" stroke="#262626" stroke-width="0.5">U</text>
<rect x="408" y="322.5" width="24" height="2.6" fill="#262626" />
<path d="M461.0,307.95 L468,316.45 L475.0,307.95" stroke="#444" stroke-width="2.9" fill="none" stroke-linecap="round" stroke-linejoin="round"/>
<rect x="496.2" y="283" width="1.8" height="55" fill="#c8c6c4" />
<rect x="513.5" y="289.5" width="37" height="37" rx="1.5" fill="#fafafa" stroke="#262626" stroke-width="3.6"/>
<line x1="532" y1="290" x2="532" y2="326" stroke="#262626" stroke-width="3.2" />
<line x1="514" y1="308" x2="550" y2="308" stroke="#262626" stroke-width="3.2" />
<path d="M573.0,307.95 L580,316.45 L587.0,307.95" stroke="#444" stroke-width="2.9" fill="none" stroke-linecap="round" stroke-linejoin="round"/>
<rect x="607.4" y="283" width="1.8" height="55" fill="#c8c6c4" />
<rect x="623.6" y="319.6" width="43.3" height="10.4" fill="#ffff00" />
<path d="M641.5,294.7 L630.5,306 L642.4,317 L657,302.5" stroke="#3b3b3b" stroke-width="3.2" fill="#fafafa" stroke-linecap="round" stroke-linejoin="round"/>
<path d="M641.5,294.7 L643,290 A3.5,3.5 0 0 1 649.5,291 L649.5,302" stroke="#3b3b3b" stroke-width="3.2" fill="none" stroke-linecap="round" stroke-linejoin="round"/>
<path d="M655,299.5 Q661,303 659.8,313.5" stroke="#1565c0" stroke-width="4.6" fill="none" stroke-linecap="round"/>
<path d="M684.5,307.5 L691.5,315.5 L698.5,307.5" stroke="#444" stroke-width="2.9" fill="none" stroke-linecap="round" stroke-linejoin="round"/>
<rect x="722.8" y="320" width="42.4" height="9.6" fill="#ff0000" />
<path d="M733,316.5 L744.7,288.5 L756.3,316.5 M737.2,307.6 L752.2,307.6" stroke="#333" stroke-width="3.6" fill="none" />
<path d="M784.0,307.5 L791,315.5 L798.0,307.5" stroke="#444" stroke-width="2.9" fill="none" stroke-linecap="round" stroke-linejoin="round"/>
<rect x="863.3" y="202.5" width="38.10000000000002" height="3.4" fill="#444" rx="1"/>
<rect x="863.3" y="224.10000000000002" width="38.10000000000002" height="3.4" fill="#444" rx="1"/>
<rect x="869.4" y="213.3" width="26.300000000000068" height="3.4" fill="#444" rx="1"/>
<rect x="924" y="210.3" width="38" height="3.4" fill="#444" rx="1"/>
<rect x="924" y="231.9" width="38" height="3.4" fill="#444" rx="1"/>
<rect x="930" y="221.0" width="26" height="3.4" fill="#444" rx="1"/>
<rect x="975.8" y="197.2" width="54.5" height="57" rx="2" fill="#d2d2d2" stroke="#b0b0b0" stroke-width="1.8"/>
<rect x="984.5" y="220.70000000000002" width="37.10000000000002" height="3.4" fill="#444" rx="1"/>
<rect x="984.5" y="242.60000000000002" width="37.10000000000002" height="3.4" fill="#444" rx="1"/>
<rect x="990.5" y="231.9" width="26.0" height="3.4" fill="#444" rx="1"/>
<text x="0" y="0" font-size="29.5" font-family="'Liberation Sans',sans-serif" fill="#333" stroke="#333" stroke-width="0.5" transform="translate(1051.5,235) rotate(-45)" textLength="33" lengthAdjust="spacingAndGlyphs">ab</text>
<path d="M1058.5,241 L1082,217.5" stroke="#1e88d8" stroke-width="3.2" fill="none" stroke-linecap="round" stroke-linejoin="round"/>
<path d="M1076,213.2 L1087,213.2 L1087,224.5 Z" stroke="none" stroke-width="2" fill="#1a80d8" />
<path d="M1097.3,222.7 L1104.3,230.7 L1111.3,222.7" stroke="#444" stroke-width="2.9" fill="none" stroke-linecap="round" stroke-linejoin="round"/>
<rect x="863.3" y="289.90000000000003" width="38.10000000000002" height="3.4" fill="#444" rx="1"/>
<rect x="863.3" y="300.8" width="26.700000000000045" height="3.4" fill="#444" rx="1"/>
<rect x="863.3" y="311.5" width="38.10000000000002" height="3.4" fill="#444" rx="1"/>
<rect x="863.3" y="321.90000000000003" width="26.700000000000045" height="3.4" fill="#444" rx="1"/>
<rect x="924" y="289.90000000000003" width="38" height="3.4" fill="#444" rx="1"/>
<rect x="930" y="300.8" width="26" height="3.4" fill="#444" rx="1"/>
<rect x="924" y="311.5" width="38" height="3.4" fill="#444" rx="1"/>
<rect x="930" y="321.90000000000003" width="26" height="3.4" fill="#444" rx="1"/>
<rect x="984.5" y="289.90000000000003" width="37.10000000000002" height="3.4" fill="#444" rx="1"/>
<rect x="995.7" y="300.8" width="25.899999999999977" height="3.4" fill="#444" rx="1"/>
<rect x="984.5" y="311.5" width="37.10000000000002" height="3.4" fill="#444" rx="1"/>
<rect x="995.7" y="321.90000000000003" width="25.899999999999977" height="3.4" fill="#444" rx="1"/>
<rect x="1045.8" y="289.90000000000003" width="38.200000000000045" height="3.4" fill="#444" rx="1"/>
<rect x="1045.8" y="321.90000000000003" width="38.200000000000045" height="3.4" fill="#444" rx="1"/>
<rect x="1068" y="300.8" width="16" height="3.4" fill="#444" rx="1"/>
<rect x="1068" y="311.5" width="16" height="3.4" fill="#444" rx="1"/>
<path d="M1061.5,308 L1048,308 M1053.5,302.5 L1048,308 L1053.5,313.5" stroke="#1e88d8" stroke-width="3" fill="none" stroke-linecap="round" stroke-linejoin="round"/>
<rect x="1106.5" y="289.90000000000003" width="37.5" height="3.4" fill="#444" rx="1"/>
<rect x="1106.5" y="321.90000000000003" width="37.5" height="3.4" fill="#444" rx="1"/>
<rect x="1128" y="300.8" width="16" height="3.4" fill="#444" rx="1"/>
<rect x="1128" y="311.5" width="16" height="3.4" fill="#444" rx="1"/>
<path d="M1107.5,308 L1121,308 M1115.5,302.5 L1121,308 L1115.5,313.5" stroke="#1e88d8" stroke-width="3" fill="none" stroke-linecap="round" stroke-linejoin="round"/>
<rect x="1164.8" y="188" width="1.8" height="159" fill="#c8c6c4" />
<rect x="1178" y="196.8" width="54.6" height="58.6" rx="2.5" fill="#d4d4d4" stroke="#b4b4b4" stroke-width="1.8"/>
<text x="1190.00" y="222.40" font-size="25.79" font-family="'Liberation Sans',sans-serif" fill="#333" textLength="31.01" lengthAdjust="spacingAndGlyphs" style="white-space:pre" stroke="#333" stroke-width="0.5">ab</text>
<text x="1190.00" y="242.60" font-size="29.55" font-family="'Liberation Sans',sans-serif" fill="#333" textLength="11.00" lengthAdjust="spacingAndGlyphs" style="white-space:pre" stroke="#333" stroke-width="0.5">c</text>
<path d="M1225.5,224.6 Q1228,236 1208,236" stroke="#1a73cf" stroke-width="3" fill="none" stroke-linecap="round" stroke-linejoin="round"/>
<path d="M1213.5,230 L1207.5,236 L1213.5,242" stroke="#1a73cf" stroke-width="3" fill="none" stroke-linecap="round" stroke-linejoin="round"/>
<rect x="1186" y="290.4" width="35.6" height="34.8" rx="1.5" fill="#fbfbfb" stroke="#3a3a3a" stroke-width="3.4"/>
<line x1="1203.9" y1="289" x2="1203.9" y2="296" stroke="#3a3a3a" stroke-width="2.6" />
<line x1="1203.9" y1="318" x2="1203.9" y2="327" stroke="#3a3a3a" stroke-width="2.6" />
<rect x="1185.6" y="297.4" width="36.4" height="19.5" fill="#ffffff" stroke="#1e88d8" stroke-width="3.2"/>
<path d="M1191,307.4 L1217,307.4 M1196,302.5 L1191,307.4 L1196,312.3 M1212,302.5 L1217,307.4 L1212,312.3" stroke="#1e88d8" stroke-width="3" fill="none" stroke-linecap="round" stroke-linejoin="round"/>
<path d="M1244.4,307.45 L1251.4,315.95 L1258.4,307.45" stroke="#444" stroke-width="2.9" fill="none" stroke-linecap="round" stroke-linejoin="round"/>
<path d="M221.5,401 L221.5,385.5 L237,385.5" stroke="#555" stroke-width="2.2" fill="none" />
<path d="M227,391 L239,403 M239,394 L239,403 L230,403" stroke="#444" stroke-width="2.4" fill="none" />
<path d="M802.5,401 L802.5,385.5 L818,385.5" stroke="#555" stroke-width="2.2" fill="none" />
<path d="M808,391 L820,403 M820,394 L820,403 L811,403" stroke="#444" stroke-width="2.4" fill="none" />
<path d="M1266.5,401 L1266.5,385.5 L1282,385.5" stroke="#555" stroke-width="2.2" fill="none" />
<path d="M1272,391 L1284,403 M1284,394 L1284,403 L1275,403" stroke="#444" stroke-width="2.4" fill="none" />
<path d="M1658.5,401 L1658.5,385.5 L1674,385.5" stroke="#555" stroke-width="2.2" fill="none" />
<path d="M1664,391 L1676,403 M1676,394 L1676,403 L1667,403" stroke="#444" stroke-width="2.4" fill="none" />
<rect x="1327" y="297" width="39.5" height="24" rx="2" fill="#fff" stroke="#444" stroke-width="3.4"/>
<path d="M1339.5,302.5 A6.5,7.8 0 0 0 1339.5,315.5" stroke="#333" stroke-width="3.2" fill="none" />
<path d="M1349,302.5 A6.5,7.8 0 0 0 1346,312" stroke="#333" stroke-width="3.2" fill="none" />
<rect x="1355" y="301" width="8" height="3" fill="#333" />
<ellipse cx="1357.6" cy="324" rx="11.3" ry="7.3" fill="#e8801a"/>
<rect x="1346.3" y="312" width="22.6" height="12" fill="#e8801a" />
<ellipse cx="1357.6" cy="312.2" rx="11.3" ry="6" fill="#e8801a"/>
<path d="M1350,316.5 Q1357.6,320 1365,316.5" stroke="#fff" stroke-width="2.6" fill="none" stroke-linecap="round"/>
<path d="M1350,324.5 Q1357.6,328 1365,324.5" stroke="#fff" stroke-width="2.6" fill="none" stroke-linecap="round"/>
<path d="M1386.5,308.0 L1393.5,316.0 L1400.5,308.0" stroke="#444" stroke-width="2.9" fill="none" stroke-linecap="round" stroke-linejoin="round"/>
<circle cx="1436.5" cy="300.5" r="5.6" fill="none" stroke="#333" stroke-width="3"/>
<circle cx="1456" cy="319.5" r="5.6" fill="none" stroke="#333" stroke-width="3"/>
<line x1="1435" y1="327.5" x2="1457.5" y2="291" stroke="#333" stroke-width="3.2" />
<path d="M1517,301 A8.5,8.5 0 1 0 1506.5,309.3 Q1507,317 1498.5,323.5 L1500,326.5 Q1518,318 1517,301 Z" stroke="none" stroke-width="2" fill="#2a2a2a" />
<rect x="1542.2" y="283" width="1.8" height="55" fill="#c8c6c4" />
<text x="1586.00" y="304.50" font-size="23.64" font-family="'Liberation Sans',sans-serif" fill="#333" textLength="12.00" lengthAdjust="spacingAndGlyphs" style="white-space:pre" stroke="#333" stroke-width="0.5">0</text>
<text x="1564.60" y="328.00" font-size="24.93" font-family="'Liberation Sans',sans-serif" fill="#333" textLength="32.90" lengthAdjust="spacingAndGlyphs" style="white-space:pre" stroke="#333" stroke-width="0.5">.00</text>
<path d="M1582,300 L1559,300 M1566,293.5 L1559,300 L1566,306.5" stroke="#1e88d8" stroke-width="3" fill="none" stroke-linecap="round" stroke-linejoin="round"/>
<text x="1625.00" y="304.50" font-size="23.64" font-family="'Liberation Sans',sans-serif" fill="#333" textLength="32.00" lengthAdjust="spacingAndGlyphs" style="white-space:pre" stroke="#333" stroke-width="0.5">.00</text>
<text x="1638.00" y="328.00" font-size="24.93" font-family="'Liberation Sans',sans-serif" fill="#333" textLength="19.00" lengthAdjust="spacingAndGlyphs" style="white-space:pre" stroke="#333" stroke-width="0.5">.0</text>
<path d="M1619,318.5 L1640,318.5 M1633.5,312 L1640,318.5 L1633.5,325" stroke="#1e88d8" stroke-width="3" fill="none" stroke-linecap="round" stroke-linejoin="round"/>
<rect x="1773" y="190.6" width="73" height="56" rx="2" fill="#fcfcfc" stroke="#444" stroke-width="2.8"/>
<line x1="1786" y1="190" x2="1786" y2="248" stroke="#555" stroke-width="2.4" />
<line x1="1832.5" y1="190" x2="1832.5" y2="248" stroke="#555" stroke-width="2.4" />
<line x1="1772" y1="209.6" x2="1847" y2="209.6" stroke="#555" stroke-width="2.4" />
<line x1="1772" y1="227.7" x2="1847" y2="227.7" stroke="#555" stroke-width="2.4" />
<rect x="1787.5" y="191" width="31.5" height="17.5" fill="#f79aa3" stroke="#d92b2b" stroke-width="3"/>
<rect x="1787.5" y="210.5" width="19" height="16.5" fill="#84bdf0"/>
<line x1="1787.5" y1="210.5" x2="1787.5" y2="227" stroke="#1570c8" stroke-width="3" />
<line x1="1807" y1="210.5" x2="1807" y2="227" stroke="#1570c8" stroke-width="3" />
<rect x="1787.5" y="229.2" width="36" height="17.5" fill="#f79aa3" stroke="#d92b2b" stroke-width="3"/>
<path d="M1886.5,325.7 L1892,333.7 L1897.5,325.7" stroke="#444" stroke-width="2.9" fill="none" stroke-linecap="round" stroke-linejoin="round"/>
<rect x="1972.2" y="209.4" width="48.6" height="37.6" fill="#84bdf0"/>
<rect x="1949.5" y="190.7" width="71" height="55.8" rx="2" fill="none" stroke="#3a3a3a" stroke-width="3"/>
<rect x="1950" y="192" width="21" height="54" fill="#fafafa" />
<rect x="1972" y="192" width="47" height="16" fill="#fafafa" />
<line x1="1972.2" y1="190" x2="1972.2" y2="209.4" stroke="#3a3a3a" stroke-width="2.6" />
<line x1="1997.1" y1="190" x2="1997.1" y2="209.4" stroke="#3a3a3a" stroke-width="2.6" />
<line x1="1949" y1="209.4" x2="1972.2" y2="209.4" stroke="#3a3a3a" stroke-width="2.6" />
<line x1="1949" y1="228.2" x2="1972.2" y2="228.2" stroke="#3a3a3a" stroke-width="2.6" />
<path d="M1972.2,247 L1972.2,209.4 L2020.8,209.4 L2020.8,247 Z" stroke="#1570c8" stroke-width="2.8" fill="none" />
<line x1="1997.1" y1="209.4" x2="1997.1" y2="247" stroke="#1570c8" stroke-width="2.6" />
<line x1="1972.2" y1="228.2" x2="2020.8" y2="228.2" stroke="#1570c8" stroke-width="2.6" />
<line x1="1988" y1="239.5" x2="2025" y2="211" stroke="#f3f2f1" stroke-width="17" stroke-linecap="round"/>
<line x1="1988" y1="239.5" x2="2025" y2="211" stroke="#333" stroke-width="10.5" stroke-linecap="round"/>
<line x1="1988" y1="239.5" x2="2025" y2="211" stroke="#fff" stroke-width="5" stroke-linecap="round"/>
<path d="M1968,253.5 Q1978.5,252.5 1981.0,243.0 A9.5,9.5 0 1 1 1995.0,255.5 Q1984.5,262.5 1968,253.5 Z" fill="#84bdf0" stroke="#f3f2f1" stroke-width="8" stroke-linejoin="round"/>
<path d="M1968,253.5 Q1978.5,252.5 1981.0,243.0 A9.5,9.5 0 1 1 1995.0,255.5 Q1984.5,262.5 1968,253.5 Z" fill="#84bdf0" stroke="#1565c0" stroke-width="3" stroke-linejoin="round"/>
<path d="M2017.7,325.7 L2023.7,333.7 L2029.7,325.7" stroke="#444" stroke-width="2.9" fill="none" stroke-linecap="round" stroke-linejoin="round"/>
<rect x="2086.5" y="190.7" width="71" height="55.8" rx="2" fill="#fafafa" stroke="#3a3a3a" stroke-width="3"/>
<line x1="2098" y1="190" x2="2098" y2="248" stroke="#3a3a3a" stroke-width="2.6" />
<line x1="2145" y1="190" x2="2145" y2="248" stroke="#3a3a3a" stroke-width="2.6" />
<line x1="2085" y1="203.6" x2="2158" y2="203.6" stroke="#3a3a3a" stroke-width="2.6" />
<line x1="2085" y1="233.6" x2="2158" y2="233.6" stroke="#3a3a3a" stroke-width="2.6" />
<rect x="2098" y="203.6" width="47" height="30" fill="#84bdf0" stroke="#1570c8" stroke-width="3"/>
<line x1="2124" y1="239.5" x2="2162" y2="211" stroke="#f3f2f1" stroke-width="17" stroke-linecap="round"/>
<line x1="2124" y1="239.5" x2="2162" y2="211" stroke="#333" stroke-width="10.5" stroke-linecap="round"/>
<line x1="2124" y1="239.5" x2="2162" y2="211" stroke="#fff" stroke-width="5" stroke-linecap="round"/>
<path d="M2104,253.5 Q2114.5,252.5 2117.0,243.0 A9.5,9.5 0 1 1 2131.0,255.5 Q2120.5,262.5 2104,253.5 Z" fill="#84bdf0" stroke="#f3f2f1" stroke-width="8" stroke-linejoin="round"/>
<path d="M2104,253.5 Q2114.5,252.5 2117.0,243.0 A9.5,9.5 0 1 1 2131.0,255.5 Q2120.5,262.5 2104,253.5 Z" fill="#84bdf0" stroke="#1565c0" stroke-width="3" stroke-linejoin="round"/>
<path d="M2158.5,325.7 L2164.5,333.7 L2170.5,325.7" stroke="#444" stroke-width="2.9" fill="none" stroke-linecap="round" stroke-linejoin="round"/>
<rect x="2234.5" y="181.1" width="39" height="32.400000000000006" rx="1.5" fill="#fafafa" stroke="#333" stroke-width="3"/>
<line x1="2247" y1="179.6" x2="2247" y2="215" stroke="#333" stroke-width="2.4" />
<line x1="2261" y1="179.6" x2="2261" y2="215" stroke="#333" stroke-width="2.4" />
<line x1="2233" y1="191" x2="2275" y2="191" stroke="#333" stroke-width="2.4" />
<line x1="2233" y1="204" x2="2275" y2="204" stroke="#333" stroke-width="2.4" />
<rect x="2231" y="187" width="7" height="17" fill="#f3f2f1" />
<rect x="2236" y="187.5" width="12.8" height="18" fill="#fafafa" />
<rect x="2249" y="191" width="25" height="13.5" fill="#84bdf0"/>
<path d="M2249,191 L2274.5,191 L2274.5,204.5 L2249,204.5" stroke="#1570c8" stroke-width="3" fill="none" />
<line x1="2261" y1="191" x2="2261" y2="204.5" stroke="#1570c8" stroke-width="2.6" />
<path d="M2250.5,196.2 L2234.5,196.2 M2242.5,188 L2234.5,196.2 L2242.5,204.3" stroke="#1e88d8" stroke-width="3.2" fill="none" stroke-linecap="round" stroke-linejoin="round"/>
<path d="M2388.0,197.8 L2395,205.8 L2402.0,197.8" stroke="#444" stroke-width="2.9" fill="none" stroke-linecap="round" stroke-linejoin="round"/>
<rect x="2234.5" y="241.0" width="39" height="33.80000000000001" rx="1.5" fill="#fafafa" stroke="#333" stroke-width="3"/>
<line x1="2247" y1="239.5" x2="2247" y2="276.3" stroke="#333" stroke-width="2.4" />
<line x1="2261" y1="239.5" x2="2261" y2="276.3" stroke="#333" stroke-width="2.4" />
<line x1="2233" y1="249" x2="2275" y2="249" stroke="#333" stroke-width="2.4" />
<line x1="2233" y1="266" x2="2275" y2="266" stroke="#333" stroke-width="2.4" />
<rect x="2236" y="250" width="38" height="15" fill="#fafafa" />
<rect x="2241.5" y="250.5" width="15.5" height="15" fill="#84bdf0" stroke="#1570c8" stroke-width="3"/>
<rect x="2231" y="251" width="6" height="14" fill="#f3f2f1" />
<rect x="2271" y="251" width="6" height="14" fill="#fafafa" />
<rect x="2241.5" y="250.5" width="15.5" height="15" fill="#84bdf0" stroke="#1570c8" stroke-width="3"/>
<path d="M2261.5,252 L2274,264.5 M2274,252 L2261.5,264.5" stroke="#e8202a" stroke-width="2.8" fill="none" />
<path d="M2393.0,259.0 L2400,267.0 L2407.0,259.0" stroke="#444" stroke-width="2.9" fill="none" stroke-linecap="round" stroke-linejoin="round"/>
<rect x="2234.5" y="303.5" width="39" height="33.39999999999998" rx="1.5" fill="#fafafa" stroke="#333" stroke-width="3"/>
<line x1="2247" y1="302" x2="2247" y2="338.4" stroke="#333" stroke-width="2.4" />
<line x1="2261" y1="302" x2="2261" y2="338.4" stroke="#333" stroke-width="2.4" />
<line x1="2233" y1="314" x2="2275" y2="314" stroke="#333" stroke-width="2.4" />
<line x1="2233" y1="327" x2="2275" y2="327" stroke="#333" stroke-width="2.4" />
<rect x="2244.5" y="313.5" width="19.5" height="14" fill="#84bdf0" stroke="#1570c8" stroke-width="3"/>
<rect x="2241" y="300" width="27" height="3.2" fill="#fafafa" />
<line x1="2242" y1="301" x2="2267" y2="301" stroke="#1e88d8" stroke-width="2.6" />
<line x1="2241.5" y1="297" x2="2241.5" y2="305" stroke="#1e88d8" stroke-width="2.4" />
<line x1="2267" y1="297" x2="2267" y2="305" stroke="#1e88d8" stroke-width="2.4" />
<path d="M2393.0,318.0 L2400,326.0 L2407.0,318.0" stroke="#444" stroke-width="2.9" fill="none" stroke-linecap="round" stroke-linejoin="round"/>
</svg></body></html>
